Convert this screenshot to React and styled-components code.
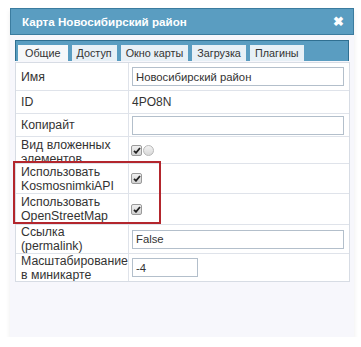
import styled, { createGlobalStyle } from 'styled-components'

const GlobalStyle = createGlobalStyle`
  html, body {
    margin: 0;
    padding: 0;
    background: #ffffff;
    font-family: "Liberation Sans", Arial, sans-serif;
  }
`

const Dialog = styled.div`
  margin: 8px 0 0 10px;
  width: 344px;
  height: 329px;
  background: #f7f7fc;
  box-shadow: 0 3px 5px rgba(0, 0, 0, 0.08);
  display: flex;
  flex-direction: column;
`
const TitleBar = styled.div`
  height: 25px;
  background: #5a9dc1;
  border: 1px solid #3b7c9f;
  display: flex;
  align-items: center;
  justify-content: space-between;
  padding: 0 9px 0 11px;
  color: #ffffff;
  font-weight: bold;
  font-size: 11.6px;
`
const Close = styled.span`
  font-size: 13px;
  line-height: 1;
`
const Content = styled.div`
  padding: 5px 5px 0 5px;
  display: flex;
  flex-direction: column;
`
const TabBar = styled.div`
  height: 16px;
  padding: 4px 2px 0 2px;
  background: #5a9dc1;
  border: 1px solid #2f6f91;
  border-bottom: none;
  display: flex;
  gap: 4px;
  align-items: flex-end;
`
const Tab = styled.div`
  height: 16px;
  padding: ${p => (p.$active ? '0 7px' : '0 5px')};
  background: ${p => (p.$active ? '#f6f8fa' : '#e7f0f6')};
  color: #333;
  font-size: 10.8px;
  line-height: 17px;
`
const Table = styled.div`
  position: relative;
  width: 333px;
  background: #ffffff;
  border: 1px solid #d7dce4;
  margin-top: 1px;
`
const Row = styled.div`
  display: grid;
  grid-template-columns: 113px 1fr;
  height: ${p => p.$h}px;
  border-top: ${p => (p.$first ? 'none' : '1px solid #dfe3ea')};
`
const Label = styled.div`
  padding: 0 4px 0 5px;
  border-right: 1px solid #dfe3ea;
  color: #333;
  font-size: 12.3px;
  line-height: 14px;
  overflow: hidden;
  display: flex;
  align-items: ${p => (p.$top ? 'flex-start' : 'center')};
  padding-top: ${p => (p.$top ? '1px' : '0')};
`
const Value = styled.div`
  padding: 0 3px;
  display: flex;
  align-items: center;
  font-size: 12px;
  color: #333;
`
const Input = styled.input`
  box-sizing: border-box;
  width: ${p => p.$w || 212}px;
  height: 19px;
  border: 1px solid #b3bfcb;
  padding: 0 3px;
  font: 11.3px "Liberation Sans", Arial, sans-serif;
  color: #333;
  background: #fff;
  outline: none;
`
const Check = styled.span`
  box-sizing: border-box;
  width: 11px;
  height: 11px;
  margin-left: -1px;
  border: 1px solid #9a9a9a;
  border-radius: 2px;
  background: linear-gradient(#f0f0f0, #d2d2d2);
  display: flex;
  align-items: center;
  justify-content: center;
`
const Radio = styled.span`
  box-sizing: border-box;
  width: 11px;
  height: 11px;
  margin-left: 1px;
  border: 1px solid #b8b8b8;
  border-radius: 50%;
  background: linear-gradient(#f2f2f2, #d9d9d9);
`
const Highlight = styled.div`
  position: absolute;
  left: -3px;
  top: 98px;
  width: 148px;
  height: 63px;
  box-sizing: border-box;
  border: 2px solid #b3262d;
  pointer-events: none;
`

function CheckMark() {
  return (
    <Check>
      <svg width="8" height="7" viewBox="0 0 8 7">
        <path d="M1 3.8 L3 5.8 L7 1" stroke="#222" strokeWidth="1.8" fill="none" />
      </svg>
    </Check>
  )
}

const tabs = ['Общие', 'Доступ', 'Окно карты', 'Загрузка', 'Плагины']

export default function App() {
  return (
    <>
      <GlobalStyle />
      <Dialog>
        <TitleBar>
          <span>Карта Новосибирский район</span>
          <Close>✖</Close>
        </TitleBar>
        <Content>
          <TabBar>
            {tabs.map((t, i) => (
              <Tab key={t} $active={i === 0}>{t}</Tab>
            ))}
          </TabBar>
          <Table>
            <Row $h={27} $first>
              <Label>Имя</Label>
              <Value><Input defaultValue="Новосибирский район" /></Value>
            </Row>
            <Row $h={22}>
              <Label>ID</Label>
              <Value>4PO8N</Value>
            </Row>
            <Row $h={22}>
              <Label>Копирайт</Label>
              <Value><Input /></Value>
            </Row>
            <Row $h={26}>
              <Label $top>Вид вложенных элементов</Label>
              <Value><CheckMark /><Radio /></Value>
            </Row>
            <Row $h={29}>
              <Label>Использовать KosmosnimkiAPI</Label>
              <Value><CheckMark /></Value>
            </Row>
            <Row $h={30}>
              <Label>Использовать OpenStreetMap</Label>
              <Value><CheckMark /></Value>
            </Row>
            <Row $h={28}>
              <Label>Ссылка (permalink)</Label>
              <Value><Input defaultValue="False" /></Value>
            </Row>
            <Row $h={27}>
              <Label>Масштабирование в миникарте</Label>
              <Value><Input $w={66} defaultValue="-4" /></Value>
            </Row>
            <Highlight />
          </Table>
        </Content>
      </Dialog>
    </>
  )
}
